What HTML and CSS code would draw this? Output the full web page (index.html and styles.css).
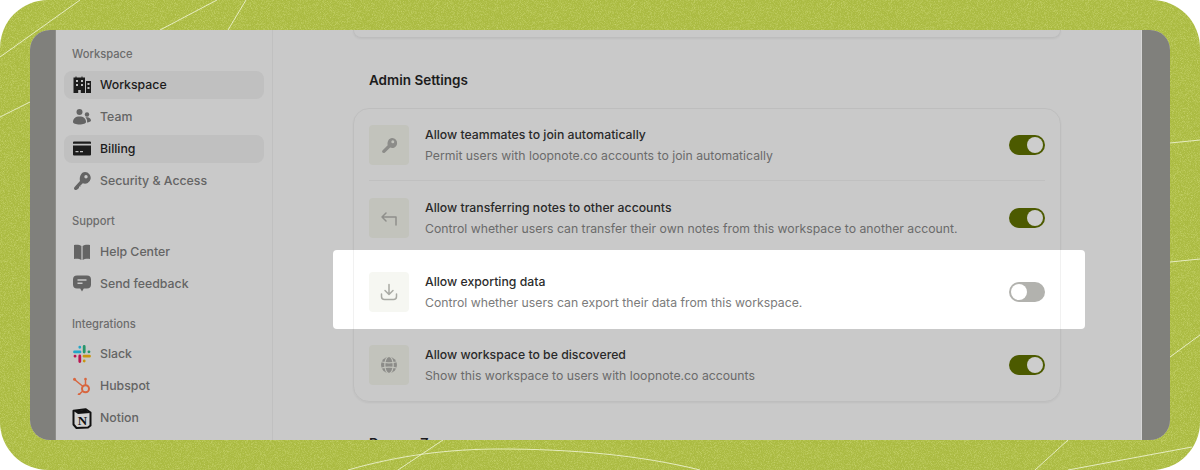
FILE: index.html
```html
<!DOCTYPE html>
<html lang="en">
<head>
    <meta charset="UTF-8">
    <title>Admin Settings</title>
    <link rel="stylesheet" href="styles.css">
</head>
<body>
    <div class="frame">
        <svg class="backdrop" width="1200" height="470" aria-hidden="true">
            <filter id="grain" x="0" y="0" width="100%" height="100%">
                <feTurbulence type="fractalNoise" baseFrequency="1.3" numOctaves="2" seed="4"/>
                <feColorMatrix type="matrix" values="0 0 0 0 0.9  0 0 0 0 0.95  0 0 0 0 0.45  0 0 0 0.8 -0.34"/>
            </filter>
            <rect width="1200" height="470" filter="url(#grain)"/>
            <g class="backdrop-lines">
                <path d="M0 57L80 0"/>
                <path d="M0 117L30 102"/>
                <path d="M160 30L217 0"/>
                <path d="M228 30L246 0"/>
                <path d="M1170 143L1200 140"/>
                <path d="M1170 262L1200 259"/>
                <path d="M1170 357L1200 335"/>
                <path d="M1068 440L1035 470"/>
                <path d="M1068 470L1192 447"/>
                <path d="M398 470L443 440"/>
                <path d="M348 470C400 455 450 449 500 449C570 449 640 455 700 470"/>
            </g>
        </svg>

        <div class="window">
            <div class="strip"></div>

            <nav class="sidebar">
                <p class="nav-label">Workspace</p>
                <a class="nav-item active">
                    <svg class="nav-icon" viewBox="0 0 18 18"><path fill-rule="evenodd" d="M0.5 1.5h2v-1h1v1h5v-1h1v1h2.500v15.500H7.800v-3H5.200v3H0.500zM3 4v2h2V4zM8 4v2h2V4zM3 8v2h2V8zM8 8v2h2V8zM13 5h5v12h-5zM14.500 7v2h2V7zM14.500 11v2h2v-2z"/></svg>
                    Workspace
                </a>
                <a class="nav-item">
                    <svg class="nav-icon" viewBox="0 0 18 18"><circle cx="6.500" cy="4" r="3"/><path d="M0 14c0-3.500 2.500-5.500 6.500-5.500s6.500 2 6.500 5.500c0 1.500-3 2.500-6.500 2.500S0 15.500 0 14z"/><circle cx="14" cy="6.500" r="2.200"/><path d="M14 14.500c.5-2-.2-3.800-1.500-5 2.800-.8 5.500.6 5.500 3 0 1-1.800 1.800-4 2z"/></svg>
                    Team
                </a>
                <a class="nav-item active">
                    <svg class="nav-icon" viewBox="0 0 18 18"><path d="M1 1.500h16a1 1 0 0 1 1 1v1.200H0V2.500a1 1 0 0 1 1-1z"/><path fill-rule="evenodd" d="M0 5.500h18v9a1 1 0 0 1-1 1H1a1 1 0 0 1-1-1zM2.500 11v1.200h3V11zM7 11v1.200h3V11z"/></svg>
                    Billing
                </a>
                <a class="nav-item">
                    <svg class="nav-icon" viewBox="0 0 18 18"><path fill-rule="evenodd" d="M12 0a5.800 5.800 0 1 1-2.200 11.200L8 13l-.5 0v1.500H6v1.500l-1.800 1.500c-1 .8-2.200.7-2.800 0s-.6-1.700.2-2.600L7 9c-1-3.800 1.200-9 5-9zM13 3a1.700 1.700 0 1 0 0 3.400A1.700 1.700 0 0 0 13 3z"/></svg>
                    Security &amp; Access
                </a>

                <p class="nav-label spaced">Support</p>
                <a class="nav-item">
                    <svg class="nav-icon" viewBox="0 0 18 18"><path d="M1 2c3-.4 5.800-.2 7.400 1v14C6.500 15.800 4 15.600 1 16z"/><path d="M17 2c-3-.4-5.800-.2-7.400 1v14c1.900-1.200 4.400-1.400 7.400-1z"/></svg>
                    Help Center
                </a>
                <a class="nav-item">
                    <svg class="nav-icon" viewBox="0 0 18 18"><path fill-rule="evenodd" d="M4 .5h10a4 4 0 0 1 4 4v5a4 4 0 0 1-4 4h-3.200L9 16.500l-1.800-3H4a4 4 0 0 1-4-4v-5a4 4 0 0 1 4-4zM4.500 4.200v1.600h9V4.200zM4.500 7.500v1.600h5V7.500z"/></svg>
                    Send feedback
                </a>

                <p class="nav-label spaced tight">Integrations</p>
                <a class="nav-item">
                    <svg class="nav-icon brand" viewBox="0 0 18 18" fill="none" stroke-width="2.800" stroke-linecap="round">
                        <path stroke="#22a6c8" d="M1.500 6.900h5.500M6.800 2.200v.1"/>
                        <path stroke="#27966a" d="M11.200 1.500v5.500M15.900 6.800h.1"/>
                        <path stroke="#c99510" d="M16.500 11.200H11M11.200 15.900v.1"/>
                        <path stroke="#bb1450" d="M6.800 16.500V11M2.100 11.200H2"/>
                    </svg>
                    Slack
                </a>
                <a class="nav-item">
                    <svg class="nav-icon brand" viewBox="0 0 18 18" fill="none" stroke="#d8663f" stroke-width="1.500">
                        <circle cx="12.500" cy="11.800" r="3.500" stroke-width="2"/>
                        <path d="M12.500 8V2M10 9.500L1.500 2.500M9.800 14L6 17.500"/>
                        <circle cx="12.500" cy="2" r="1.300" fill="#d8663f" stroke="none"/>
                        <circle cx="1.500" cy="2.200" r="1.500" fill="#d8663f" stroke="none"/>
                        <circle cx="6" cy="17.500" r="1.300" fill="#d8663f" stroke="none"/>
                    </svg>
                    Hubspot
                </a>
                <a class="nav-item">
                    <svg class="nav-icon notion" viewBox="0 0 20 21">
                        <path class="notion-box" d="M1.500 2.800L13.500 1.200L18.500 4.500V17.500L16 19.500L4.500 20L1.500 16.500z"/>
                        <path d="M2 3.200L13.500 1.800L18 5L6 6z"/>
                        <text x="10.500" y="16.500" class="notion-letter">N</text>
                    </svg>
                    Notion
                </a>
            </nav>

            <main class="main">
                <div class="card-end"></div>

                <h2>Admin Settings</h2>
                <section class="card">
                    <div class="row">
                        <div class="row-icon">
                            <svg viewBox="0 0 20 20" class="fill"><path fill-rule="evenodd" d="M13 3a5 5 0 1 1-1.800 9.600L6 17.500c-.8.700-1.900.7-2.500.1s-.5-1.600.2-2.300l5-5C7.900 6.700 10 3 13 3zM13.800 5.300a1.500 1.500 0 1 0 0 3 1.500 1.500 0 0 0 0-3z"/></svg>
                        </div>
                        <div class="row-text">
                            <p class="row-title">Allow teammates to join automatically</p>
                            <p class="row-desc">Permit users with loopnote.co accounts to join automatically</p>
                        </div>
                        <span class="toggle on"></span>
                    </div>
                    <div class="row">
                        <div class="row-icon">
                            <svg viewBox="0 0 20 20" class="line"><path d="M3 9h14v8M7 5L3 9l4 4"/></svg>
                        </div>
                        <div class="row-text">
                            <p class="row-title">Allow transferring notes to other accounts</p>
                            <p class="row-desc">Control whether users can transfer their own notes from this workspace to another account.</p>
                        </div>
                        <span class="toggle on"></span>
                    </div>
                    <div class="row focus">
                        <div class="row-icon">
                            <svg viewBox="0 0 20 20" class="line"><path d="M10 2.500V12.500M6 8.500l4 4 4-4M2.500 12v2.500a3 3 0 0 0 3 3h9a3 3 0 0 0 3-3V12"/></svg>
                        </div>
                        <div class="row-text">
                            <p class="row-title">Allow exporting data</p>
                            <p class="row-desc">Control whether users can export their data from this workspace.</p>
                        </div>
                        <span class="toggle"></span>
                    </div>
                    <div class="row">
                        <div class="row-icon">
                            <svg viewBox="0 0 20 20" class="globe">
                                <circle cx="10" cy="10" r="8"/>
                                <g><ellipse cx="10" cy="10" rx="4.200" ry="8.500"/><path d="M1 6.500c5 1.600 13 1.600 18 0M1 13.500c5-1.600 13-1.600 18 0"/></g>
                            </svg>
                        </div>
                        <div class="row-text">
                            <p class="row-title">Allow workspace to be discovered</p>
                            <p class="row-desc">Show this workspace to users with loopnote.co accounts</p>
                        </div>
                        <span class="toggle on"></span>
                    </div>
                </section>

                <h2 class="next">Danger Zone</h2>
            </main>

            <div class="strip strip-right"></div>
        </div>
    </div>
</body>
</html>
```

FILE: styles.css
```css
* {
    box-sizing: border-box;
}

body {
    margin: 0;
    background-color: #fff;
    font-family: Inter, "Liberation Sans", sans-serif;
}

p, h2 {
    margin: 0;
}

.frame {
    position: relative;
    width: 1200px;
    height: 470px;
    padding: 30px;
    overflow: hidden;
    border-radius: 48px;
    background-color: #abbb42;
}

.backdrop {
    position: absolute;
    top: 0;
    left: 0;
}

.backdrop-lines {
    fill: none;
    stroke: #e6ecc0;
    stroke-width: 1;
}

.window {
    position: relative;
    display: flex;
    height: 410px;
    overflow: hidden;
    border-radius: 20px;
    background-color: #c9c9c9;
}

.strip {
    flex: 0 0 26px;
    background-color: #80807c;
    border-right: 1px solid #8e8e8a;
}

.strip-right {
    flex: 0 0 29px;
    border-right: none;
    border-left: 1px solid #d6d6d6;
}

/* sidebar */
.sidebar {
    flex: 0 0 217px;
    padding: 16px 8px 0;
    border-right: 1px solid #c0c0c0;
}

.nav-label {
    height: 16px;
    margin: 0 0 9px 8px;
    font-size: 11.2px;
    font-weight: 500;
    line-height: 16px;
    color: #6c6c6c;
}

.nav-label.spaced {
    margin-top: 18px;
}

.nav-label.tight {
    margin-bottom: 8px;
}

.nav-item {
    display: flex;
    align-items: center;
    gap: 9px;
    height: 28px;
    margin-bottom: 4px;
    padding: 0 0 2px 9px;
    border-radius: 8px;
    font-size: 12.3px;
    font-weight: 500;
    color: #646464;
}

.nav-item.active {
    background-color: #c0c0c0;
    color: #1c1c1c;
}

.nav-icon {
    flex: 0 0 18px;
    width: 18px;
    height: 18px;
    margin-top: 2px;
    fill: currentColor;
}

.brand {
    fill: none;
}

.notion {
    flex: 0 0 20px;
    width: 20px;
    height: 21px;
    margin: 2px -1px 0;
    overflow: visible;
    fill: #111;
}

.notion-box {
    fill: #d2d2d2;
    stroke: #111;
    stroke-width: 2;
    stroke-linejoin: round;
}

.notion-letter {
    font-family: "Liberation Serif", serif;
    font-size: 13px;
    font-weight: 700;
    text-anchor: middle;
}

/* main column */
.main {
    flex: 1;
    min-width: 0;
    overflow: hidden;
}

.card-end {
    width: 708px;
    height: 8px;
    margin: 0 auto;
    border: 1px solid #bdbdbd;
    border-top: none;
    border-radius: 0 0 16px 16px;
    box-shadow: 0 1px 2px rgba(0, 0, 0, 0.05);
}

h2 {
    width: 708px;
    margin: 32px auto 18px;
    padding-left: 16px;
    font-size: 13.5px;
    font-weight: 600;
    line-height: 20px;
    color: #1c1c1c;
}

h2.next {
    margin-top: 31px;
}

.card {
    position: relative;
    width: 708px;
    height: 294px;
    margin: 0 auto;
    padding: 0 16px;
    border-radius: 16px;
    box-shadow: 0 1px 2px rgba(0, 0, 0, 0.05);
}

.card::after {
    content: "";
    position: absolute;
    top: 0;
    right: 0;
    bottom: 0;
    left: 0;
    z-index: 2;
    border: 1px solid rgba(0, 0, 0, 0.055);
    border-radius: 16px;
    pointer-events: none;
}

.row {
    display: flex;
    align-items: flex-start;
    gap: 16px;
    height: 73.33px;
    padding-top: 17px;
    border-bottom: 1px solid #c0c0c0;
}

.row:last-child {
    border-bottom: none;
}

.row-icon {
    display: flex;
    flex: 0 0 40px;
    align-items: center;
    justify-content: center;
    width: 40px;
    height: 40px;
    border-radius: 4px;
    background-color: #c2c3bc;
}

.row-icon svg {
    width: 20px;
    height: 20px;
}

.fill {
    fill: #8c8c89;
}

.line {
    fill: none;
    stroke: #8f8f8b;
    stroke-width: 1.5;
    stroke-linecap: round;
    stroke-linejoin: round;
}

.globe circle {
    fill: #8c8c89;
}

.globe g {
    fill: none;
    stroke: #c2c3bc;
    stroke-width: 1.2;
}

.row-text {
    flex: 1;
    min-width: 0;
}

.row-title {
    font-size: 12.25px;
    font-weight: 450;
    line-height: 20px;
    color: #2a2a2a;
}

.row-desc {
    margin-top: 1px;
    font-size: 12.25px;
    line-height: 20px;
    color: #6b6b6b;
}

.toggle {
    flex: 0 0 36px;
    width: 36px;
    height: 20px;
    margin-top: 10px;
    padding: 2px;
    border-radius: 10px;
    background-color: #b2b2ae;
}

.toggle::after {
    content: "";
    display: block;
    width: 16px;
    height: 16px;
    border-radius: 50%;
    background-color: #fff;
}

.toggle.on {
    background-color: #4c5a00;
}

.toggle.on::after {
    margin-left: 16px;
    background-color: #cdcdcd;
}

/* the row lifted out of the dimmed page */
.focus {
    position: relative;
    z-index: 1;
    border-bottom-color: #f5f5f5;
}

.focus::before {
    content: "";
    position: absolute;
    top: -5px;
    right: -40px;
    bottom: -2px;
    left: -36px;
    z-index: -1;
    border-radius: 4px;
    background-color: #fff;
}

.focus .row-icon {
    background-color: #f6f7f2;
}

.focus .line {
    stroke: #a9aaa4;
}

.focus .row-title {
    color: #2c2c2c;
}

.focus .row-desc {
    color: #7b7b7b;
}
```
